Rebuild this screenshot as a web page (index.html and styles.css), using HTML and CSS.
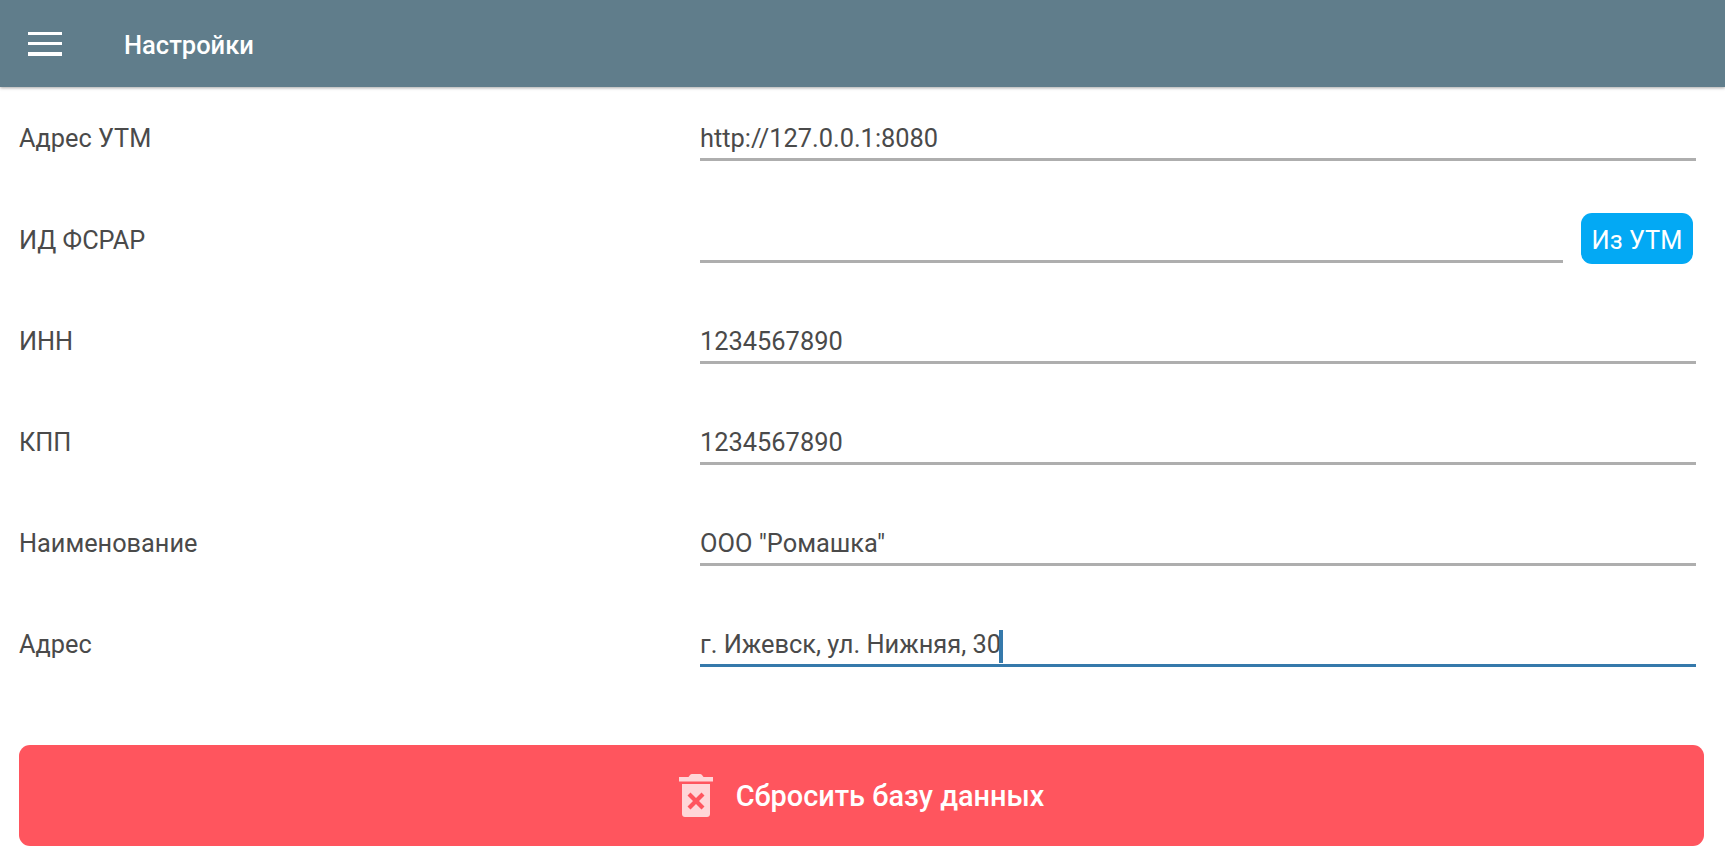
FILE: index.html
```html
<!DOCTYPE html>
<html lang="ru">
<head>
<meta charset="utf-8">
<title>Настройки</title>
<link rel="stylesheet" href="styles.css">
</head>
<body>
<header class="appbar">
  <div class="burger"><span></span><span></span><span></span></div>
  <h1 class="title">Настройки</h1>
</header>
<main class="form">
  <div class="row"><label class="label">Адрес УТМ</label><div class="field"><div class="input">http://127.0.0.1:8080</div></div></div>
  <div class="row"><label class="label">ИД ФСРАР</label><div class="field"><div class="input"></div><button class="fetch">Из УТМ</button></div></div>
  <div class="row"><label class="label">ИНН</label><div class="field"><div class="input">1234567890</div></div></div>
  <div class="row"><label class="label">КПП</label><div class="field"><div class="input">1234567890</div></div></div>
  <div class="row"><label class="label">Наименование</label><div class="field"><div class="input">ООО "Ромашка"</div></div></div>
  <div class="row"><label class="label">Адрес</label><div class="field"><div class="input focused">г. Ижевск, ул. Нижняя, 30<span class="caret"></span></div></div></div>
  <button class="reset">
    <svg class="trash" viewBox="0 0 34 43" width="34" height="43" aria-hidden="true">
      <path fill="#ffd6d8" d="M0 3h9.500L11 1c.5-.6 1.200-1 2-1h8c.8 0 1.500.4 2 1l1.500 2H34v4.500H0z"/>
      <path fill="#ffd6d8" fill-rule="evenodd" d="M3 10h28v30c0 1.700-1.300 3-3 3H6c-1.700 0-3-1.300-3-3zM11.500 18.500l-3 3 5.500 5.500-5.500 5.500 3 3 5.500-5.500 5.500 5.500 3-3-5.500-5.500 5.500-5.500-3-3-5.500 5.500z"/>
    </svg>
    <span>Сбросить базу данных</span>
  </button>
</main>
</body>
</html>
```
FILE: styles.css
```css
* { box-sizing: border-box; }
html, body { margin: 0; height: 100%; background: #fff; overflow: hidden; }
body { font-family: Roboto, "Noto Sans", sans-serif; color: #4a4a4a; }
.appbar {
  height: 87px;
  background: #607d8b;
  display: flex;
  align-items: center;
  padding-left: 28px;
  box-shadow: 0 1px 3px rgba(0,0,0,.35);
  position: relative;
}
.burger { width: 34px; height: 24px; display: flex; flex-direction: column; justify-content: space-between; }
.burger span { display: block; height: 3.500px; background: #fff; }
.title { margin: 2px 0 0 62px; font-size: 25.500px; font-weight: 500; color: #fff; }
.form { padding: 1.300px 21px 0 19px; }
.row { display: flex; align-items: center; height: 101.2px; }
.label { width: 681px; font-size: 25.300px; }
.field { flex: 1; display: flex; align-items: center; gap: 18px; margin-right: 8px; }
.input {
  flex: 1;
  height: 44px;
  line-height: 43px;
  font-size: 25.400px;
  border-bottom: 3px solid #aeaeae;
  margin-bottom: -1px;
  white-space: nowrap;
}
.input.focused { border-bottom-color: #3579ab; }
.caret { display: inline-block; width: 3.500px; height: 33px; margin-left: -2px; background: #3579ab; vertical-align: middle; }
.fetch {
  width: 112px;
  height: 51px;
  flex: none;
  margin: 0 3px 3px 0;
  border: 0;
  border-radius: 11px;
  background: #03a9f4;
  color: #fff;
  font: 400 25.400px Roboto, sans-serif;
  padding: 3px 0 0;
}
.reset {
  width: 100%;
  height: 101px;
  margin-top: 49.700px;
  border: 0;
  border-radius: 11px;
  background: #ff555e;
  color: #fff;
  display: flex;
  align-items: center;
  justify-content: center;
  gap: 23px;
  font: 500 28.900px Roboto, sans-serif;
}
.trash { display: block; }
```
